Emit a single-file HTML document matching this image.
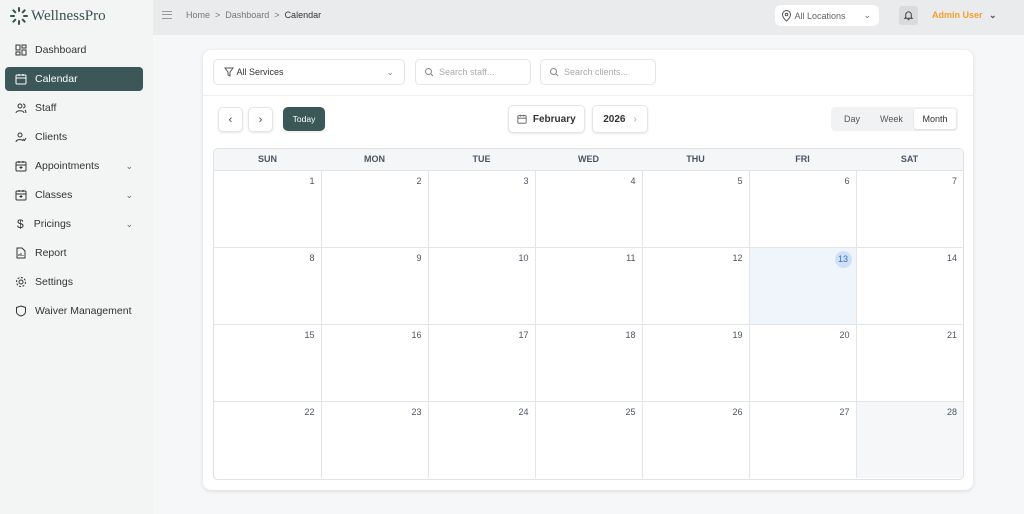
<!DOCTYPE html><html><head><style>
*{box-sizing:border-box;margin:0;padding:0}
body{width:1024px;height:514px;overflow:hidden;font-family:"Liberation Sans",sans-serif;background:#f6f7f8;position:relative;color:#374151}
.sb{position:absolute;left:0;top:0;width:153px;height:514px;background:#f3f4f4}
.logo{position:absolute;left:10px;top:7px;font-family:"Liberation Serif",serif;font-size:15px;color:#3b5252;display:flex;align-items:center;gap:3px}
.nav{position:absolute;left:5px;width:138px;height:24px;display:flex;align-items:center;font-size:10.5px;color:#333}
.nav svg{margin-left:10px;margin-right:8px}
.nav.act{background:#3b5757;color:#fff;border-radius:4px}
.chev{position:absolute;right:10px;font-size:9px;color:#666}
.top{position:absolute;left:153px;top:0;right:0;height:35px;background:#e9ebed}
.card{position:absolute;left:203px;top:50px;width:770px;height:440px;background:#fff;border-radius:8px;box-shadow:0 1px 4px rgba(0,0,0,.12)}
.inp{position:absolute;height:26px;border:1px solid #e3e5e8;border-radius:5px;background:#fff;font-size:9px;display:flex;align-items:center}
.btn{position:absolute;background:#fff;border:1px solid #e3e5e8;border-radius:5px;box-shadow:0 1px 2px rgba(0,0,0,.1);display:flex;align-items:center;justify-content:center}
.grid{position:absolute;left:10px;top:98px;width:751px;height:332px;border:1px solid #dfe2e6;border-radius:5px;overflow:hidden}
table{border-collapse:collapse;width:100%;table-layout:fixed}
th{height:21px;background:#f5f6f7;font-size:9px;font-weight:bold;color:#4b5563;border-bottom:1px solid #dfe2e6}
td{height:77px;border-right:1px solid #e3e5e8;border-bottom:1px solid #e3e5e8;vertical-align:top;text-align:right;font-size:9px;color:#4b5563;padding:5px 6px}
</style></head><body>
<div class="sb">
<div class="logo"><svg width="18" height="18" viewBox="0 0 18 18" stroke="#3b5252" stroke-width="2" stroke-linecap="round"><path d="M9 1v3M9 14v3M1 9h3M14 9h3M3.3 3.3l2 2M12.7 12.7l2 2M14.7 3.3l-2 2M5.3 12.7l-2 2"/></svg>WellnessPro</div>
<div class="nav" style="top:38px"><svg width="12" height="12" viewBox="0 0 12 12" fill="none" stroke="#333"><rect x="1" y="1" width="4" height="5"/><rect x="7" y="1" width="4" height="3"/><rect x="1" y="8" width="4" height="3"/><rect x="7" y="6" width="4" height="5"/></svg>Dashboard</div>
<div class="nav act" style="top:67px"><svg width="12" height="12" viewBox="0 0 12 12" fill="none" stroke="#fff"><rect x="1" y="2" width="10" height="9" rx="1"/><path d="M1 5h10M4 1v2M8 1v2"/></svg>Calendar</div>
<div class="nav" style="top:96px"><svg width="12" height="12" viewBox="0 0 12 12" fill="none" stroke="#333"><circle cx="5" cy="4" r="2"/><path d="M1 11c0-3 8-3 8 0M8 2a2 2 0 010 4M10 8c1 1 1 2 1 3"/></svg>Staff</div>
<div class="nav" style="top:125px"><svg width="12" height="12" viewBox="0 0 12 12" fill="none" stroke="#333"><circle cx="5" cy="4" r="2"/><path d="M1 11c0-3 7-3 7-1M8 8l1.5 1.5L11 7"/></svg>Clients</div>
<div class="nav" style="top:154px"><svg width="12" height="12" viewBox="0 0 12 12" fill="none" stroke="#333"><rect x="1" y="2" width="10" height="9" rx="1"/><path d="M1 5h10M4 1v2M8 1v2M6 6v3M4.5 7.5h3"/></svg>Appointments<span class="chev">⌄</span></div>
<div class="nav" style="top:183px"><svg width="12" height="12" viewBox="0 0 12 12" fill="none" stroke="#333"><rect x="1" y="2" width="10" height="9" rx="1"/><path d="M1 5h10M4 1v2M8 1v2M6 6v3M4.5 7.5h3"/></svg>Classes<span class="chev">⌄</span></div>
<div class="nav" style="top:212px"><span style="margin:0 10px 0 12px;font-size:12px">$</span>Pricings<span class="chev">⌄</span></div>
<div class="nav" style="top:241px"><svg width="12" height="12" viewBox="0 0 12 12" fill="none" stroke="#333"><path d="M2 1h5l3 3v7H2z"/><path d="M4 9V7M6 9V6M8 9V8"/></svg>Report</div>
<div class="nav" style="top:270px"><svg width="12" height="12" viewBox="0 0 12 12" fill="none" stroke="#333"><circle cx="6" cy="6" r="2"/><circle cx="6" cy="6" r="4.5" stroke-dasharray="2 1.5"/></svg>Settings</div>
<div class="nav" style="top:299px"><svg width="12" height="12" viewBox="0 0 12 12" fill="none" stroke="#333"><path d="M6 1l4.5 1.5v4C10.5 9 8 10.5 6 11 4 10.5 1.5 9 1.5 6.5v-4z"/></svg>Waiver Management</div>
</div>
<div class="top">
<div style="position:absolute;left:9px;top:11px;width:10px;height:8px;border-top:1.5px solid #999;border-bottom:1.5px solid #999"><div style="margin-top:2px;border-top:1.5px solid #999"></div></div>
<div style="position:absolute;left:33px;top:10px;font-size:9px;color:#777">Home &nbsp;&gt;&nbsp; Dashboard &nbsp;&gt;&nbsp; <span style="color:#333">Calendar</span></div>
<div style="position:absolute;left:622px;top:5px;width:104px;height:21px;background:#fff;border-radius:6px;font-size:9px;color:#666;display:flex;align-items:center;padding-left:6px"><svg width="11" height="12" viewBox="0 0 11 12" fill="none" stroke="#555"><path d="M5.5 11S1.5 7.5 1.5 4.5a4 4 0 018 0c0 3-4 6.5-4 6.5z"/><circle cx="5.5" cy="4.5" r="1.3"/></svg>&nbsp;All Locations<span style="position:absolute;right:8px;font-size:9px">⌄</span></div>
<div style="position:absolute;left:746px;top:6px;width:19px;height:19px;background:#d9dbdd;border-radius:3px;display:flex;align-items:center;justify-content:center"><svg width="11" height="11" viewBox="0 0 12 12" fill="none" stroke="#333"><path d="M3 8V5a3 3 0 016 0v3l1 1H2zM5 10.5h2"/></svg></div>
<div style="position:absolute;left:779px;top:10px;font-size:9px;font-weight:bold;color:#f59e2b">Admin User <span style="color:#555;margin-left:4px">⌄</span></div>
</div>
<div class="card">
<div class="inp" style="left:10px;top:9px;width:192px;padding-left:10px;color:#333"><svg width="10" height="10" viewBox="0 0 10 10" fill="none" stroke="#555"><path d="M1 1h8L6 5v4L4 8V5z"/></svg>&nbsp;All Services<span style="position:absolute;right:10px;color:#888">⌄</span></div>
<div class="inp" style="left:212px;top:9px;width:116px;padding-left:8px;color:#aaa"><svg width="10" height="10" viewBox="0 0 10 10" fill="none" stroke="#888"><circle cx="4.5" cy="4.5" r="3"/><path d="M7 7l2 2"/></svg>&nbsp;&nbsp;Search staff...</div>
<div class="inp" style="left:337px;top:9px;width:116px;padding-left:8px;color:#aaa"><svg width="10" height="10" viewBox="0 0 10 10" fill="none" stroke="#888"><circle cx="4.5" cy="4.5" r="3"/><path d="M7 7l2 2"/></svg>&nbsp;&nbsp;Search clients...</div>
<div style="position:absolute;left:0;right:0;top:45px;border-top:1px solid #eef0f2"></div>
<div class="btn" style="left:15px;top:57px;width:25px;height:25px;font-size:11px">‹</div>
<div class="btn" style="left:45px;top:57px;width:25px;height:25px;font-size:11px">›</div>
<div class="btn" style="left:80px;top:57px;width:42px;height:24px;background:#3b5757;border-color:#3b5757;color:#fff;font-size:8.5px">Today</div>
<div class="btn" style="left:305px;top:55px;width:77px;height:28px;font-size:10px;font-weight:bold;color:#333"><svg width="10" height="10" viewBox="0 0 12 12" fill="none" stroke="#555"><rect x="1" y="2" width="10" height="9" rx="1"/><path d="M1 5h10M4 1v2M8 1v2"/></svg>&nbsp;&nbsp;February</div>
<div class="btn" style="left:389px;top:55px;width:56px;height:28px;font-size:10px;font-weight:bold;color:#333">2026 <span style="color:#aaa;font-weight:normal;margin-left:8px">›</span></div>
<div style="position:absolute;left:628px;top:57px;width:127px;height:24px;background:#f1f2f4;border-radius:4px;font-size:9px;color:#555">
<span style="position:absolute;left:13px;top:7px">Day</span><span style="position:absolute;left:49px;top:7px">Week</span>
<div style="position:absolute;left:83px;top:2px;width:42px;height:20px;background:#fff;border-radius:3px;box-shadow:0 1px 2px rgba(0,0,0,.1);text-align:center;line-height:20px;color:#333">Month</div></div>
<div class="grid"><table>
<tr><th>SUN</th><th>MON</th><th>TUE</th><th>WED</th><th>THU</th><th>FRI</th><th>SAT</th></tr>
<tr><td>1</td><td>2</td><td>3</td><td>4</td><td>5</td><td>6</td><td style="border-right:0">7</td></tr>
<tr><td>8</td><td>9</td><td>10</td><td>11</td><td>12</td><td style="background:#f0f5fb;padding:3px 4px"><span style="display:inline-block;width:17px;height:17px;border-radius:50%;background:#cfe0f8;color:#3b6fc4;text-align:center;line-height:17px">13</span></td><td style="border-right:0">14</td></tr>
<tr><td>15</td><td>16</td><td>17</td><td>18</td><td>19</td><td>20</td><td style="border-right:0">21</td></tr>
<tr><td style="border-bottom:0">22</td><td style="border-bottom:0">23</td><td style="border-bottom:0">24</td><td style="border-bottom:0">25</td><td style="border-bottom:0">26</td><td style="border-bottom:0">27</td><td style="border:0;background:#f6f7f9">28</td></tr>
</table></div>
</div>
</body></html>
